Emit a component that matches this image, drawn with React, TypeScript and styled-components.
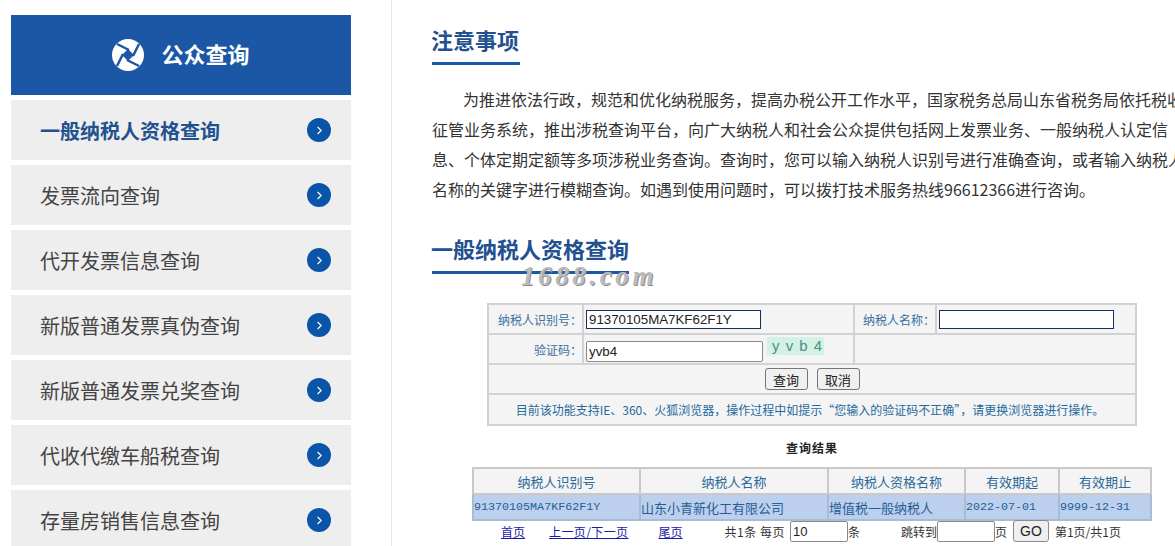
import styled, { createGlobalStyle } from "styled-components";
import { ChevronRight } from "lucide-react";

const CJK = `"Noto Sans CJK SC", "Liberation Sans", sans-serif`;
const BLUE = "#1c57a5";

const GlobalStyle = createGlobalStyle`
  html, body {
    margin: 0;
    padding: 0;
    height: 546px;
    overflow: hidden;
    background: #fff;
    font-family: ${CJK};
  }
`;

const Page = styled.div`
  display: flex;
  width: 1175px;
  height: 546px;
  overflow: hidden;
  box-sizing: border-box;
  padding: 15px 0 0 11px;
`;

const Sidebar = styled.aside`
  flex: none;
  width: 340px;
  display: flex;
  flex-direction: column;
  gap: 5px;
`;

const SideHeader = styled.div`
  flex: none;
  height: 80px;
  background: ${BLUE};
  color: #fff;
  display: flex;
  align-items: center;
  justify-content: center;
  gap: 17px;
  font-size: 22px;
  font-weight: 700;
`;

const HeaderTitle = styled.span`
  padding-bottom: 4px;
`;

const NavItem = styled.div<{ $active?: boolean }>`
  flex: none;
  height: 60px;
  background: #eeeeee;
  display: flex;
  align-items: center;
  justify-content: space-between;
  padding: 0 20px 0 29px;
  font-size: 20px;
  color: ${(p) => (p.$active ? "#23508f" : "#444")};
  font-weight: ${(p) => (p.$active ? 700 : 400)};
`;

const NavDot = styled.span`
  width: 24px;
  height: 24px;
  border-radius: 50%;
  background: #0b55a8;
  color: #fff;
  display: flex;
  align-items: center;
  justify-content: center;
`;

const Main = styled.main`
  flex: none;
  margin-left: 40px;
  margin-top: -15px;
  border-left: 1px solid #e6e6e6;
  padding-left: 40px;
  width: 760px;
  position: relative;
`;

const Heading = styled.div`
  display: inline-block;
  font-size: 22px;
  font-weight: 700;
  line-height: 30px;
  color: #23508f;
  text-indent: -1px;
  padding-right: 1px;
  padding-bottom: 8px;
  border-bottom: 3px solid ${BLUE};
`;

const FirstHeading = styled(Heading)`
  margin-top: 24px;
`;

const Notice = styled.p`
  margin: 19px 0 0;
  width: 760px;
  font-size: 16px;
  line-height: 30px;
  color: #333;
  text-indent: 31px;
`;

const SecondHeading = styled(Heading)`
  margin-top: 29px;
  display: block;
  width: 197px;
  padding-right: 0;
  white-space: nowrap;
`;

const Watermark = styled.div`
  position: absolute;
  left: 129px;
  top: 266px;
  font-family: "Liberation Serif", serif;
  font-style: italic;
  font-weight: 700;
  font-size: 27px;
  line-height: 20px;
  letter-spacing: 3.6px;
  color: #bcbcbc;
  text-shadow: 1px 1px 0 #8f8f8f;
`;

const FormTable = styled.table`
  border-collapse: collapse;
  table-layout: fixed;
  width: 648px;
  margin: 29px 0 0 55px;
  background: #f4f4f4;
  border: 2px solid #c9c9c9;
  font-size: 12px;
  color: #3a6f9e;
`;

const FormCell = styled.td<{ $label?: boolean; $h?: number }>`
  border: 2px solid #d2d2d2;
  padding: 0 ${(p) => (p.$label ? 0 : 2)}px 0 2px;
  height: ${(p) => p.$h ?? 28}px;
  text-align: ${(p) => (p.$label ? "right" : "left")};
  white-space: nowrap;
`;

const CenterCell = styled(FormCell)`
  text-align: center;
`;

const NoticeCell = styled(CenterCell)`
  color: #1f6a9c;
  font-size: 12px;
  padding-right: 6px;
`;

const TextInput = styled.input<{ $w: number; $dark?: boolean }>`
  box-sizing: border-box;
  width: ${(p) => p.$w}px;
  height: ${(p) => (p.$dark ? 19 : 21)}px;
  padding: 0 2px;
  border: 1px solid ${(p) => (p.$dark ? "#16325c" : "#8a8a8a")};
  border-radius: ${(p) => (p.$dark ? 0 : 2)}px;
  background: #fff;
  font-family: "Liberation Sans", sans-serif;
  font-size: 13.3px;
  color: #222;
  vertical-align: middle;
`;

const CaptchaRow = styled.div`
  display: flex;
  align-items: flex-start;
  height: 27px;
  gap: 4px;
`;

const CaptchaInput = styled(TextInput)`
  margin-top: 5px;
`;

const Captcha = styled.span`
  box-sizing: border-box;
  width: 57px;
  height: 18px;
  margin-top: 1px;
  padding-left: 5px;
  background: #d4f1e6;
  font-family: "Liberation Sans", sans-serif;
  font-size: 15px;
  line-height: 17px;
  word-spacing: 2px;
  color: #4f8f80;
  white-space: pre;
`;

const Button = styled.button`
  box-sizing: border-box;
  width: 43px;
  height: 22px;
  padding: 0;
  background: #f0f0f0;
  border: 1px solid #767676;
  border-radius: 3px;
  font-family: ${CJK};
  font-size: 13px;
  color: #222;
`;

const ButtonRow = styled.div`
  display: flex;
  justify-content: center;
  gap: 9px;
`;

const ResultTitle = styled.div`
  margin: 14px 0 0 55px;
  width: 650px;
  text-align: center;
  font-size: 12px;
  line-height: 16px;
  font-weight: 700;
  color: #222;
  letter-spacing: 1px;
`;

const ResultTable = styled.table`
  border-collapse: collapse;
  table-layout: fixed;
  width: 678px;
  margin: 11px 0 0 40px;
  border: 2px solid #c4c4c4;
  font-size: 13px;
  color: #2b6a9b;
`;

const HeadCell = styled.th`
  height: 24px;
  padding: 0;
  background: #f4f4f4;
  border: 2px solid #c9c9c9;
  font-weight: 400;
  text-align: center;
`;

const DataCell = styled.td<{ $mono?: boolean }>`
  height: 24px;
  padding: 0;
  background: #bcd0ee;
  border: 2px solid #a9bcd6;
  white-space: nowrap;
  overflow: hidden;
  font-family: ${(p) => (p.$mono ? `"Liberation Mono", monospace` : CJK)};
  font-size: ${(p) => (p.$mono ? "11.7px" : "13px")};
  color: #1f5f96;
`;

const Pager = styled.div`
  display: flex;
  align-items: center;
  height: 22px;
  margin: -1px 0 0 69px;
  font-size: 12px;
  color: #333;
  white-space: nowrap;
`;

const PageLink = styled.a<{ $gap: number }>`
  margin-right: ${(p) => p.$gap}px;
  color: #1a1aa6;
  text-decoration: underline;
  cursor: pointer;
`;

const WideLink = styled(PageLink)`
  letter-spacing: 0.4px;
`;

const PagerText = styled.span<{ $gap?: number }>`
  margin-right: ${(p) => p.$gap ?? 0}px;
`;

const CountText = styled(PagerText)`
  letter-spacing: 0.5px;
`;

const PagerInput = styled.input`
  box-sizing: border-box;
  width: 58px;
  height: 21px;
  padding: 0 2px;
  border: 1px solid #8a8a8a;
  border-radius: 2px;
  font-family: "Liberation Sans", sans-serif;
  font-size: 13px;
  color: #222;
`;

const GoButton = styled.button`
  box-sizing: border-box;
  width: 36px;
  height: 22px;
  margin: 0 6px;
  padding: 0;
  background: #efefef;
  border: 1px solid #8a8a8a;
  border-radius: 3px;
  font-family: "Liberation Sans", sans-serif;
  font-size: 14px;
  color: #222;
`;

const navItems = [
  "一般纳税人资格查询",
  "发票流向查询",
  "代开发票信息查询",
  "新版普通发票真伪查询",
  "新版普通发票兑奖查询",
  "代收代缴车船税查询",
  "存量房销售信息查询",
];

const noticeText =
  "为推进依法行政\uFF0C规范和优化纳税服务\uFF0C提高办税公开工作水平\uFF0C国家税务总局山东省税务局依托税收征管业务系统\uFF0C推出涉税查询平台\uFF0C向广大纳税人和社会公众提供包括网上发票业务、一般纳税人认定信息、个体定期定额等多项涉税业务查询。查询时\uFF0C您可以输入纳税人识别号进行准确查询\uFF0C或者输入纳税人名称的关键字进行模糊查询。如遇到使用问题时\uFF0C可以拨打技术服务热线96612366进行咨询。";

const browserHint =
  "目前该功能支持IE、360、火狐浏览器\uFF0C操作过程中如提示\u201C您输入的验证码不正确\u201D\uFF0C请更换浏览器进行操作。";

const Logo = () => (
  <svg width="32" height="32" viewBox="0 0 32 32" aria-hidden="true">
    <circle cx="16" cy="16" r="16" fill="#fff" />
    <path d="M16 10 L22 16 L16 22 L10 16 Z" fill="#1c57a5" />
    <path d="M5 5 L17 11 M27 5 L21 17 M27 27 L15 21 M5 27 L11 15" stroke="#1c57a5" strokeWidth="2.5" fill="none" />
  </svg>
);

export default function App() {
  return (
    <>
      <GlobalStyle />
      <Page>
        <Sidebar>
          <SideHeader>
            <Logo />
            <HeaderTitle>公众查询</HeaderTitle>
          </SideHeader>
          {navItems.map((name, i) => (
            <NavItem key={name} $active={i === 0}>
              {name}
              <NavDot>
                <ChevronRight size={13} strokeWidth={2} />
              </NavDot>
            </NavItem>
          ))}
        </Sidebar>
        <Main>
          <FirstHeading>注意事项</FirstHeading>
          <Notice>{noticeText}</Notice>
          <SecondHeading>一般纳税人资格查询</SecondHeading>
          <Watermark>1688.com</Watermark>

          <FormTable>
            <colgroup>
              <col width="95" />
              <col width="271" />
              <col width="82" />
              <col width="200" />
            </colgroup>
            <tbody>
              <tr>
                <FormCell $label $h={28}>{"纳税人识别号\uFF1A"}</FormCell>
                <FormCell>
                  <TextInput $w={175} $dark defaultValue="91370105MA7KF62F1Y" />
                </FormCell>
                <FormCell $label $h={28}>{"纳税人名称\uFF1A"}</FormCell>
                <FormCell>
                  <TextInput $w={175} $dark />
                </FormCell>
              </tr>
              <tr>
                <FormCell $label $h={28}>{"验证码\uFF1A"}</FormCell>
                <FormCell>
                  <CaptchaRow>
                    <CaptchaInput $w={177} defaultValue="yvb4" />
                    <Captcha>y v b 4</Captcha>
                  </CaptchaRow>
                </FormCell>
                <FormCell $h={28} colSpan={2} />
              </tr>
              <tr>
                <CenterCell colSpan={4} $h={28}>
                  <ButtonRow>
                    <Button>查询</Button>
                    <Button>取消</Button>
                  </ButtonRow>
                </CenterCell>
              </tr>
              <tr>
                <NoticeCell colSpan={4} $h={29}>
                  {browserHint}
                </NoticeCell>
              </tr>
            </tbody>
          </FormTable>

          <ResultTitle>查询结果</ResultTitle>

          <ResultTable>
            <colgroup>
              <col width="167" />
              <col width="188" />
              <col width="137" />
              <col width="94" />
              <col width="92" />
            </colgroup>
            <thead>
              <tr>
                <HeadCell>纳税人识别号</HeadCell>
                <HeadCell>纳税人名称</HeadCell>
                <HeadCell>纳税人资格名称</HeadCell>
                <HeadCell>有效期起</HeadCell>
                <HeadCell>有效期止</HeadCell>
              </tr>
            </thead>
            <tbody>
              <tr>
                <DataCell $mono>91370105MA7KF62F1Y</DataCell>
                <DataCell>山东小青新化工有限公司</DataCell>
                <DataCell>增值税一般纳税人</DataCell>
                <DataCell $mono>2022-07-01</DataCell>
                <DataCell $mono>9999-12-31</DataCell>
              </tr>
            </tbody>
          </ResultTable>

          <Pager>
            <PageLink $gap={24}>首页</PageLink>
            <WideLink $gap={30}>上一页/下一页</WideLink>
            <PageLink $gap={42}>尾页</PageLink>
            <CountText $gap={5}>共1条 每页</CountText>
            <PagerInput defaultValue="10" />
            <PagerText $gap={41}>条</PagerText>
            <PagerText>跳转到</PagerText>
            <PagerInput />
            <PagerText>页</PagerText>
            <GoButton>GO</GoButton>
            <PagerText>第1页/共1页</PagerText>
          </Pager>
        </Main>
      </Page>
    </>
  );
}
